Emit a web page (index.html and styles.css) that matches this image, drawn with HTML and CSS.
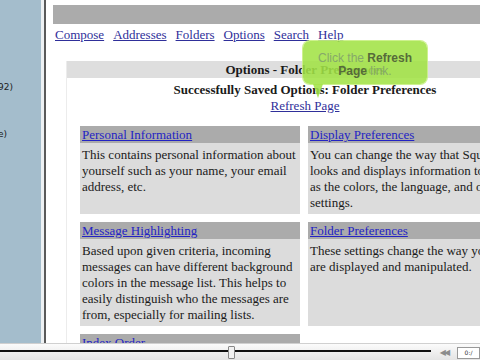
FILE: index.html
```html
<!DOCTYPE html>
<html>
<head>
<meta charset="utf-8">
<link rel="stylesheet" href="styles.css">
</head>
<body>
<div class="screen">
  <div class="main">
    <aside class="sidebar">
      <div class="sb-item sb1">92)</div>
      <div class="sb-item sb2">e)</div>
    </aside>
    <div class="divider"></div>
    <div class="content">
      <div class="topbar"></div>
      <nav class="nav">
        <a href="#">Compose</a>
        <a href="#">Addresses</a>
        <a href="#">Folders</a>
        <a href="#">Options</a>
        <a href="#">Search</a>
        <a href="#">Help</a>
      </nav>
      <div class="options">
        <div class="opt-head">Options - Folder Preferences</div>
        <div class="saved">Successfully Saved Options: Folder Preferences</div>
        <div class="refresh"><a href="#">Refresh Page</a></div>
        <div class="grid">
          <div class="card">
            <div class="card-head"><a href="#">Personal Information</a></div>
            <div class="card-body">This contains personal information about yourself such as your name, your email address, etc.</div>
          </div>
          <div class="card">
            <div class="card-head"><a href="#">Display Preferences</a></div>
            <div class="card-body">You can change the way that SquirrelMail looks and displays information to you, such as the colors, the language, and other settings.</div>
          </div>
          <div class="card">
            <div class="card-head"><a href="#">Message Highlighting</a></div>
            <div class="card-body">Based upon given criteria, incoming messages can have different background colors in the message list. This helps to easily distinguish who the messages are from, especially for mailing lists.</div>
          </div>
          <div class="card">
            <div class="card-head"><a href="#">Folder Preferences</a></div>
            <div class="card-body">These settings change the way your folders are displayed and manipulated.</div>
          </div>
          <div class="card">
            <div class="card-head"><a href="#">Index Order</a></div>
            <div class="card-body">The order of the message index can be rearranged and changed to contain the headers in any order you want.</div>
          </div>
        </div>
      </div>
      <div class="tooltip">
        <div class="tip-line"><span class="tip-light">Click the </span><span class="tip-strong">Refresh</span></div>
        <div class="tip-line"><span class="tip-strong">Page</span><span class="tip-light"> link.</span></div>
        <div class="tip-tail"></div>
      </div>
    </div>
  </div>
  <div class="player">
    <div class="track">
      <div class="track-line"></div>
      <div class="thumb"></div>
    </div>
    <div class="rewind">&#9664;&#9664;</div>
    <div class="timebox">0:/</div>
  </div>
</div>
</body>
</html>
```

FILE: styles.css
```css
html, body {
  margin: 0;
  padding: 0;
  background: #ffffff;
}

.screen {
  width: 480px;
  height: 360px;
  overflow: hidden;
  display: flex;
  flex-direction: column;
  font-family: "Liberation Serif", "Times New Roman", serif;
  font-size: 13px;
  color: #1a1a1a;
}

.main {
  display: flex;
  height: 343px;
  overflow: hidden;
}

.sidebar {
  width: 41px;
  flex: none;
  background: #a4bdcc;
  font-family: "DejaVu Sans", sans-serif;
  font-size: 9px;
  color: #222;
  overflow: hidden;
}

.sb-item {
  line-height: 12px;
  margin-left: -2px;
}

.sb1 {
  padding-top: 81px;
}

.sb2 {
  padding-top: 35px;
}

.divider {
  width: 3px;
  flex: none;
  background: #eef1f3;
  border-right: 2px solid #5a5a5a;
}

.content {
  flex: 1;
  position: relative;
  overflow: hidden;
  background: #ffffff;
}

.topbar {
  margin: 5px 0 0 7px;
  height: 19px;
  background: #ababab;
}

.nav {
  display: flex;
  gap: 9px;
  margin: 3px 0 0 9px;
  line-height: 16px;
  white-space: nowrap;
}

.nav a {
  color: #2f2f9a;
  text-decoration: underline;
}

.options {
  margin: 18px 0 0 20px;
  width: 476px;
  border-left: 1px solid #ececec;
}

.opt-head {
  height: 17px;
  line-height: 17px;
  background: #dedede;
  text-align: center;
  font-weight: bold;
}

.saved {
  padding-top: 4px;
  line-height: 16px;
  text-align: center;
  font-weight: bold;
}

.refresh {
  line-height: 16px;
  text-align: center;
}

.refresh a {
  color: #2f2f9a;
}

.grid {
  margin: 12px 0 0 13px;
  display: grid;
  grid-template-columns: 220px 236px;
  column-gap: 8px;
  row-gap: 8px;
}

.card {
  display: flex;
  flex-direction: column;
}

.card-head {
  background: #ababab;
  height: 17px;
  line-height: 18px;
  padding: 0 2px;
  white-space: nowrap;
}

.card-head a {
  color: #2323c4;
}

.card-body {
  flex: 1;
  background: #dcdcdc;
  padding: 4px 2px 3px 2px;
  line-height: 16px;
}

.tooltip {
  position: absolute;
  left: 257px;
  top: 41px;
  width: 124px;
  height: 43px;
  border-radius: 7px;
  background: rgba(162, 226, 70, 0.88);
  box-shadow: 0 0 0 1px rgba(200, 240, 130, 0.9);
  font-family: "Liberation Sans", Arial, sans-serif;
  font-size: 12px;
  text-align: center;
  padding-top: 11px;
  box-sizing: border-box;
}

.tip-line {
  line-height: 13px;
}

.tip-light {
  color: #86a86a;
}

.tip-strong {
  color: #566b3a;
  font-weight: bold;
}

.tip-tail {
  position: absolute;
  left: 10px;
  top: 43px;
  width: 0;
  height: 0;
  border-left: 5px solid transparent;
  border-right: 5px solid transparent;
  border-top: 14px solid rgba(162, 226, 70, 0.88);
}

.player {
  height: 17px;
  display: flex;
  align-items: center;
  background: linear-gradient(#fbfbfb, #e4e4e4);
  border-top: 1px solid #d0d0d0;
  box-sizing: border-box;
}

.track {
  width: 431px;
  height: 17px;
  position: relative;
  flex: none;
}

.track-line {
  margin-top: 6px;
  height: 2px;
  background: #111;
}

.thumb {
  position: absolute;
  left: 228px;
  top: 2px;
  width: 5px;
  height: 11px;
  background: #f2f2f2;
  border: 1px solid #888;
  border-radius: 1px;
}

.rewind {
  width: 26px;
  flex: none;
  font-size: 8px;
  letter-spacing: -2px;
  color: #8c8c8c;
  font-family: "DejaVu Sans", sans-serif;
  text-align: center;
}

.timebox {
  flex: 1;
  height: 10px;
  margin-top: 2px;
  background: #fff;
  border: 1px solid #999;
  font-family: "DejaVu Sans", sans-serif;
  font-size: 6px;
  line-height: 10px;
  text-align: center;
  color: #333;
}
```
